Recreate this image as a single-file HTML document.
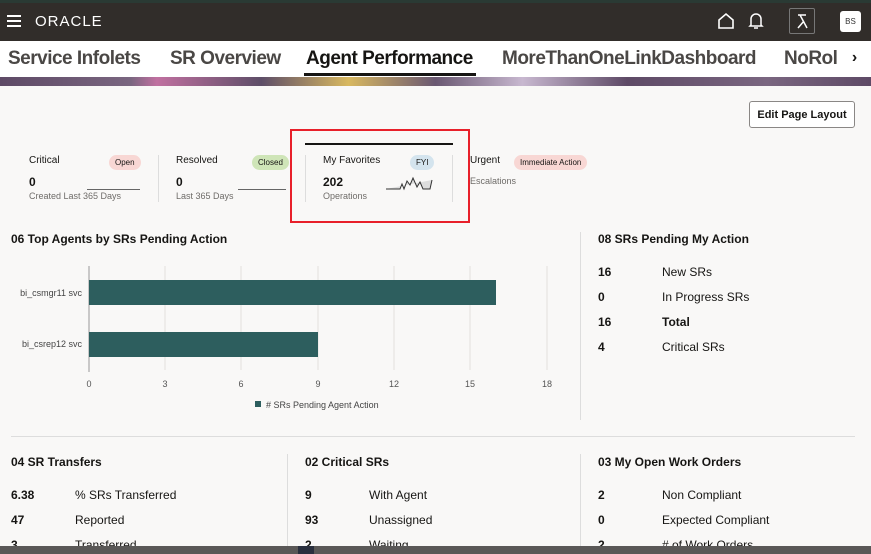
<!DOCTYPE html>
<html><head><style>
*{margin:0;padding:0;box-sizing:border-box}
body{width:871px;height:554px;overflow:hidden;background:#f9f8f7;font-family:"Liberation Sans",sans-serif;color:#161513;position:relative}
.a{position:absolute}
.hdr{left:0;top:0;width:871px;height:41px;background:#312d2a;border-top:3px solid #2a3a34}
.tabs{left:0;top:41px;width:871px;height:36px;background:#fff}
.tab{position:absolute;top:7px;font-size:19px;font-weight:bold;color:#4a4745;letter-spacing:-0.5px;white-space:nowrap}
.banner{left:0;top:77px;width:871px;height:9px;background:linear-gradient(90deg,#5e4a66,#7a6680 15%,#c070a0 18%,#5e4e68 30%,#d8b860 40%,#6a5872 50%,#c8b8d0 60%,#5e4a66 72%,#7a6680 88%,#5e4a66)}
.s{font-size:10px}
.lbl{font-size:10px;color:#6f6c69}
.badge{position:absolute;font-size:8px;padding:3px 6px;border-radius:8px}
.h{font-size:12px;font-weight:bold}
.r{font-size:12px}
</style></head><body>
<div class="a hdr"></div>
<div class="a" style="left:7px;top:15px;width:14px;height:2px;background:#fff;box-shadow:0 5px 0 #fff,0 10px 0 #fff"></div>
<div class="a" style="left:35px;top:13px;color:#fff;font-size:15px;letter-spacing:1px">ORACLE</div>
<svg class="a" style="left:717px;top:12px" width="18" height="18"><path d="M2 16V8L9 2L16 8V16Z" fill="none" stroke="#fff" stroke-width="1.6"/></svg>
<svg class="a" style="left:748px;top:11px" width="16" height="20"><path d="M3 14V8a5 5 0 0 1 10 0v6l1 1H2Z M6 17h4" fill="none" stroke="#fff" stroke-width="1.5"/></svg>
<div class="a" style="left:789px;top:8px;width:26px;height:26px;border:1px solid #777;border-radius:2px"></div>
<svg class="a" style="left:795px;top:13px" width="14" height="16"><path d="M3 2h8M5 2l7 13M9 8l-6 7" stroke="#fff" stroke-width="1.5" fill="none"/></svg>
<div class="a" style="left:840px;top:11px;width:21px;height:21px;background:#fff;border-radius:3px;font-size:8px;text-align:center;line-height:21px;color:#333">BS</div>
<div class="a tabs"></div>
<div class="tab" style="left:8px;top:48px">Service Infolets</div>
<div class="tab" style="left:170px;top:48px">SR Overview</div>
<div class="tab" style="left:306px;top:48px;color:#161513">Agent Performance</div>
<div class="a" style="left:304px;top:73px;width:172px;height:3px;background:#161513"></div>
<div class="tab" style="left:502px;top:48px">MoreThanOneLinkDashboard</div>
<div class="tab" style="left:784px;top:48px">NoRol</div>
<div class="a" style="left:838px;top:41px;width:33px;height:36px;background:#fff;font-size:16px;text-align:center;line-height:34px;font-weight:bold">›</div>
<div class="a banner"></div>
<div class="a" style="left:749px;top:101px;width:106px;height:27px;border:1px solid #8a8785;border-radius:3px;background:#fff;font-size:11px;font-weight:bold;text-align:center;line-height:26px">Edit Page Layout</div>
<div class="a s" style="left:29px;top:155px">Critical</div>
<div class="badge" style="left:109px;top:155px;background:#f8d7d4">Open</div>
<div class="a" style="left:29px;top:175px;font-size:12px;font-weight:bold">0</div>
<div class="a" style="left:87px;top:189px;width:53px;height:1px;background:#666"></div>
<div class="a lbl" style="left:29px;top:191px;font-size:9px">Created Last 365 Days</div>
<div class="a" style="left:158px;top:155px;width:1px;height:47px;background:#ddd"></div>
<div class="a s" style="left:176px;top:155px">Resolved</div>
<div class="badge" style="left:252px;top:155px;background:#cfe5b8">Closed</div>
<div class="a" style="left:176px;top:175px;font-size:12px;font-weight:bold">0</div>
<div class="a" style="left:238px;top:189px;width:48px;height:1px;background:#666"></div>
<div class="a lbl" style="left:176px;top:191px;font-size:9px">Last 365 Days</div>
<div class="a" style="left:305px;top:155px;width:1px;height:47px;background:#ddd"></div>
<div class="a" style="left:290px;top:129px;width:180px;height:94px;border:2px solid #e8202a"></div>
<div class="a" style="left:305px;top:143px;width:148px;height:2px;background:#161513"></div>
<div class="a s" style="left:323px;top:155px">My Favorites</div>
<div class="badge" style="left:410px;top:155px;background:#d4e4ee">FYI</div>
<div class="a" style="left:323px;top:175px;font-size:12px;font-weight:bold">202</div>
<svg class="a" style="left:385px;top:173px" width="50" height="18"><path d="M1 16H15L17 11L19 16L22 8L25 12L28 5L32 14L35 9L38 16H45L47 7" fill="#ddd" stroke="#333" stroke-width="1"/></svg>
<div class="a lbl" style="left:323px;top:191px;font-size:9px">Operations</div>
<div class="a" style="left:452px;top:155px;width:1px;height:47px;background:#ddd"></div>
<div class="a s" style="left:470px;top:155px">Urgent</div>
<div class="badge" style="left:514px;top:155px;background:#f8d7d4">Immediate Action</div>
<div class="a lbl" style="left:470px;top:176px;font-size:9px">Escalations</div>
<div class="a h" style="left:11px;top:232px">06 Top Agents by SRs Pending Action</div>
<svg class="a" style="left:0;top:260px" width="570" height="160">
<g stroke="#e3e1de" stroke-width="1"><line x1="165" y1="6" x2="165" y2="110"/><line x1="241" y1="6" x2="241" y2="110"/><line x1="318" y1="6" x2="318" y2="110"/><line x1="394" y1="6" x2="394" y2="110"/><line x1="470" y1="6" x2="470" y2="110"/><line x1="547" y1="6" x2="547" y2="110"/></g>
<line x1="89" y1="6" x2="89" y2="112" stroke="#999"/>
<rect x="89" y="20" width="407" height="25" fill="#2d5e5e"/>
<rect x="89" y="72" width="229" height="25" fill="#2d5e5e"/>
<g font-size="9" fill="#444" text-anchor="end"><text x="82" y="36">bi_csmgr11 svc</text><text x="82" y="87">bi_csrep12 svc</text></g>
<g font-size="9" fill="#555" text-anchor="middle"><text x="89" y="127">0</text><text x="165" y="127">3</text><text x="241" y="127">6</text><text x="318" y="127">9</text><text x="394" y="127">12</text><text x="470" y="127">15</text><text x="547" y="127">18</text></g>
<rect x="255" y="141" width="6" height="6" fill="#2d5e5e"/><text x="266" y="148" font-size="9" fill="#444">#  SRs Pending Agent Action</text>
</svg>
<div class="a" style="left:580px;top:232px;width:1px;height:188px;background:#ddd"></div>
<div class="a h" style="left:598px;top:232px">08 SRs Pending My Action</div>
<div class="a r" style="left:598px;top:265px;font-weight:bold">16</div><div class="a r" style="left:662px;top:265px">New SRs</div>
<div class="a r" style="left:598px;top:290px;font-weight:bold">0</div><div class="a r" style="left:662px;top:290px">In Progress SRs</div>
<div class="a r" style="left:598px;top:315px;font-weight:bold">16</div><div class="a r" style="left:662px;top:315px;font-weight:bold">Total</div>
<div class="a r" style="left:598px;top:340px;font-weight:bold">4</div><div class="a r" style="left:662px;top:340px">Critical SRs</div>
<div class="a" style="left:11px;top:436px;width:844px;height:1px;background:#ddd"></div>
<div class="a" style="left:287px;top:454px;width:1px;height:100px;background:#ddd"></div>
<div class="a" style="left:580px;top:454px;width:1px;height:100px;background:#ddd"></div>
<div class="a h" style="left:11px;top:455px">04 SR Transfers</div>
<div class="a r" style="left:11px;top:488px;font-weight:bold">6.38</div><div class="a r" style="left:75px;top:488px">% SRs Transferred</div>
<div class="a r" style="left:11px;top:513px;font-weight:bold">47</div><div class="a r" style="left:75px;top:513px">Reported</div>
<div class="a r" style="left:11px;top:538px;font-weight:bold">3</div><div class="a r" style="left:75px;top:538px">Transferred</div>
<div class="a h" style="left:305px;top:455px">02 Critical SRs</div>
<div class="a r" style="left:305px;top:488px;font-weight:bold">9</div><div class="a r" style="left:369px;top:488px">With Agent</div>
<div class="a r" style="left:305px;top:513px;font-weight:bold">93</div><div class="a r" style="left:369px;top:513px">Unassigned</div>
<div class="a r" style="left:305px;top:538px;font-weight:bold">2</div><div class="a r" style="left:369px;top:538px">Waiting</div>
<div class="a h" style="left:598px;top:455px">03 My Open Work Orders</div>
<div class="a r" style="left:598px;top:488px;font-weight:bold">2</div><div class="a r" style="left:662px;top:488px">Non Compliant</div>
<div class="a r" style="left:598px;top:513px;font-weight:bold">0</div><div class="a r" style="left:662px;top:513px">Expected Compliant</div>
<div class="a r" style="left:598px;top:538px;font-weight:bold">2</div><div class="a r" style="left:662px;top:538px"># of Work Orders</div>
<div class="a" style="left:0;top:546px;width:871px;height:8px;background:#5a5857"></div>
<div class="a" style="left:298px;top:546px;width:16px;height:8px;background:#2a2f3e"></div>
</body></html>
